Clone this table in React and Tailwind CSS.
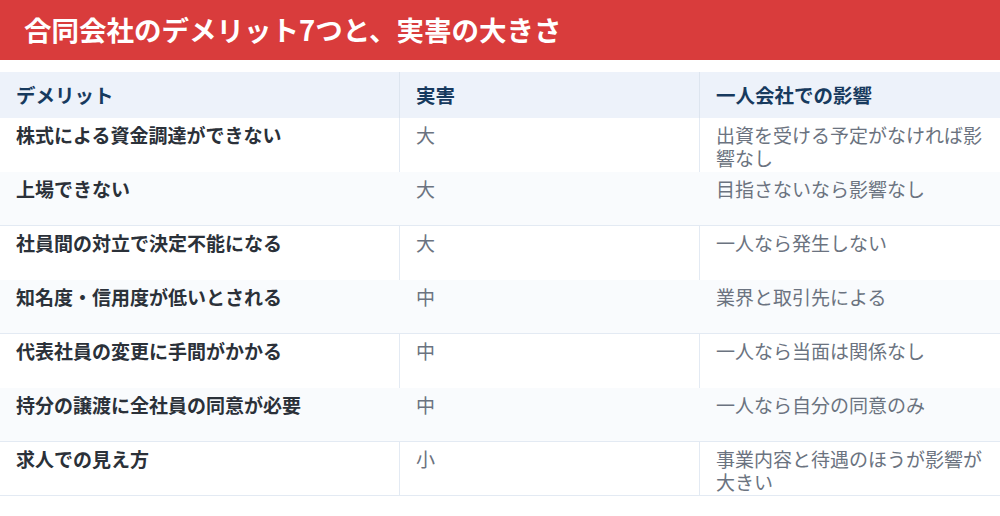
import React from 'react';

const rows = [
  ['株式による資金調達ができない', '大', '出資を受ける予定がなければ影響なし'],
  ['上場できない', '大', '目指さないなら影響なし'],
  ['社員間の対立で決定不能になる', '大', '一人なら発生しない'],
  ['知名度・信用度が低いとされる', '中', '業界と取引先による'],
  ['代表社員の変更に手間がかかる', '中', '一人なら当面は関係なし'],
  ['持分の譲渡に全社員の同意が必要', '中', '一人なら自分の同意のみ'],
  ['求人での見え方', '小', '事業内容と待遇のほうが影響が大きい'],
];

export default function App() {
  return (
    <div
      className="w-[1000px] h-[516px] bg-white overflow-hidden"
      style={{ fontFamily: '"Noto Sans CJK JP", "Noto Sans", sans-serif' }}
    >
      <div className="h-[60px] bg-[#d93c3c] flex items-center pl-[24px]">
        <h1 className="text-[27.5px] font-bold text-white leading-none">
          合同会社のデメリット7つと、実害の大きさ
        </h1>
      </div>

      <div className="mt-3">
        {/* header */}
        <div className="grid grid-cols-[400px_300px_300px] h-[46px] bg-[#edf2fa] text-[#173a5e] font-bold text-[19.5px]">
          <div className="flex items-center px-4 border-r border-[#dde5ef]">デメリット</div>
          <div className="flex items-center px-4 border-r border-[#dde5ef]">実害</div>
          <div className="flex items-center px-4">一人会社での影響</div>
        </div>

        {rows.map(([a, b, c], i) => {
          const even = i % 2 === 1;
          const last = i === rows.length - 1;
          return (
            <div
              key={i}
              className={
                'grid grid-cols-[400px_300px_300px] h-[54px] text-[19px] leading-[23px] ' +
                (even ? 'bg-[#f9fbfd] border-b border-[#e3eaf3]' : 'bg-white') +
                (last ? ' border-b border-[#e3eaf3]' : '')
              }
            >
              <div className={'px-4 pt-[5px] font-bold text-[#2b3139] ' + (even ? '' : 'border-r border-[#e3eaf3]')}>
                {a}
              </div>
              <div className={'px-4 pt-[5px] text-[#6b7380] ' + (even ? '' : 'border-r border-[#e3eaf3]')}>
                {b}
              </div>
              <div className="px-4 pt-[5px] text-[#6b7380]">{c}</div>
            </div>
          );
        })}
      </div>
    </div>
  );
}
